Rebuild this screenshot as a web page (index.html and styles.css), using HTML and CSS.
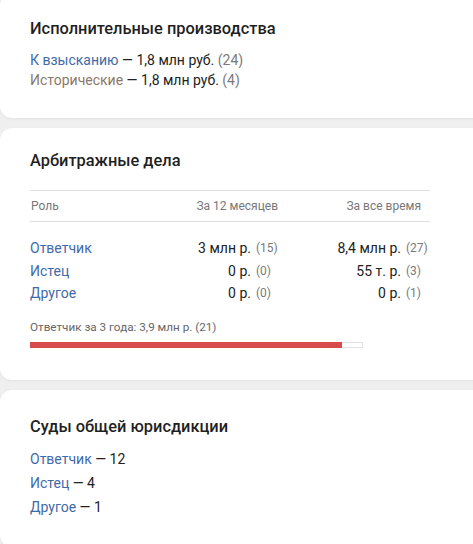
FILE: index.html
```html
<!DOCTYPE html>
<html lang="ru">
<head>
    <meta charset="UTF-8">
    <meta name="viewport" content="width=device-width, initial-scale=1.0">
    <title>Суды и производства</title>
    <link rel="stylesheet" href="styles.css">
</head>
<body>
    <div class="page">
        <!-- Исполнительные производства -->
        <section class="card card-first">
            <h2 class="card-title">Исполнительные производства</h2>
            <div class="lines">
                <div class="line"><a class="link" href="#">К взысканию</a> — 1,8 млн руб. <span class="count">(24)</span></div>
                <div class="line"><a class="link link-muted" href="#">Исторические</a> — 1,8 млн руб. <span class="count">(4)</span></div>
            </div>
        </section>

        <!-- Арбитражные дела -->
        <section class="card card-arbitr">
            <h2 class="card-title">Арбитражные дела</h2>
            <div class="table">
                <div class="table-head">
                    <div>Роль</div>
                    <div class="head-num">За 12 месяцев</div>
                    <div class="head-num head-last">За все время</div>
                </div>
                <div class="table-body">
                    <div class="table-row">
                        <a class="link" href="#">Ответчик</a>
                        <div class="cell-num"><span>3 млн р.</span><span class="count">(15)</span></div>
                        <div class="cell-num"><span>8,4 млн р.</span><span class="count">(27)</span></div>
                    </div>
                    <div class="table-row">
                        <a class="link" href="#">Истец</a>
                        <div class="cell-num"><span>0 р.</span><span class="count">(0)</span></div>
                        <div class="cell-num"><span>55 т. р.</span><span class="count">(3)</span></div>
                    </div>
                    <div class="table-row">
                        <a class="link" href="#">Другое</a>
                        <div class="cell-num"><span>0 р.</span><span class="count">(0)</span></div>
                        <div class="cell-num"><span>0 р.</span><span class="count">(1)</span></div>
                    </div>
                </div>
            </div>
            <div class="summary">Ответчик за 3 года: 3,9 млн р. (21)</div>
            <div class="bar">
                <div class="bar-fill" style="width: 94%"></div>
            </div>
        </section>

        <!-- Суды общей юрисдикции -->
        <section class="card card-courts">
            <h2 class="card-title">Суды общей юрисдикции</h2>
            <div class="lines lines-wide">
                <div class="line"><a class="link" href="#">Ответчик</a> — 12</div>
                <div class="line"><a class="link" href="#">Истец</a> — 4</div>
                <div class="line"><a class="link" href="#">Другое</a> — 1</div>
            </div>
        </section>
    </div>
</body>
</html>
```

FILE: styles.css
```css
/* Общие настройки */
body {
    margin: 0;
    background-color: #efefef;
    color: #222222;
    font-family: Roboto, "Noto Sans", Arial, sans-serif;
    overflow: hidden;
}

.page {
    display: flex;
    flex-direction: column;
    gap: 10px;
    margin-right: -20px;
}

/* Карточки */
.card {
    background-color: #ffffff;
    border-radius: 12px;
    padding: 24px 30px 28px 30px;
    box-shadow: 0 1px 3px rgba(0, 0, 0, 0.05);
}

.card-first {
    margin-top: -6px;
}

.card-arbitr {
    padding-top: 22px;
    padding-bottom: 32px;
}

.card-courts {
    padding-top: 26px;
}

.card-title {
    margin: 0;
    font-size: 16.4px;
    line-height: 22px;
    font-weight: 500;
    color: #1f1f1f;
}

/* Строки со ссылками */
.lines {
    margin-top: 10px;
    font-size: 14px;
    line-height: 20px;
}

.lines-wide {
    line-height: 24px;
    margin-top: 9px;
}

.link {
    color: #416aa8;
    text-decoration: none;
}

.link-muted {
    color: #8b7968;
}

.count {
    color: #7a7a7a;
}

/* Таблица арбитражных дел */
.table {
    width: 400px;
    margin-top: 18px;
}

.table-head,
.table-row {
    display: grid;
    grid-template-columns: 1fr 150px 150px;
}

.table-head {
    border-top: 1px solid #dedede;
    border-bottom: 1px solid #dedede;
    padding: 7px 0 7px 1px;
    font-size: 12px;
    line-height: 16px;
    color: #777777;
}

.head-num {
    text-align: right;
    padding-right: 2px;
}

.head-last {
    padding-right: 9px;
}

.table-body {
    padding-top: 15px;
}

.table-row {
    font-size: 14px;
    line-height: 22.5px;
}

.cell-num {
    display: flex;
    justify-content: flex-end;
}

.cell-num .count {
    width: 24px;
    margin-left: 5px;
    font-size: 12px;
}

/* Итог и полоса */
.summary {
    margin-top: 15px;
    font-size: 11.7px;
    line-height: 15px;
    color: #666666;
}

.bar {
    width: 332px;
    height: 4px;
    margin-top: 7px;
    border: 1px solid #e2e2e2;
    border-left: none;
    background-color: #ffffff;
}

.bar-fill {
    height: 6px;
    margin-top: -1px;
    background-color: #d94b4b;
}
```
